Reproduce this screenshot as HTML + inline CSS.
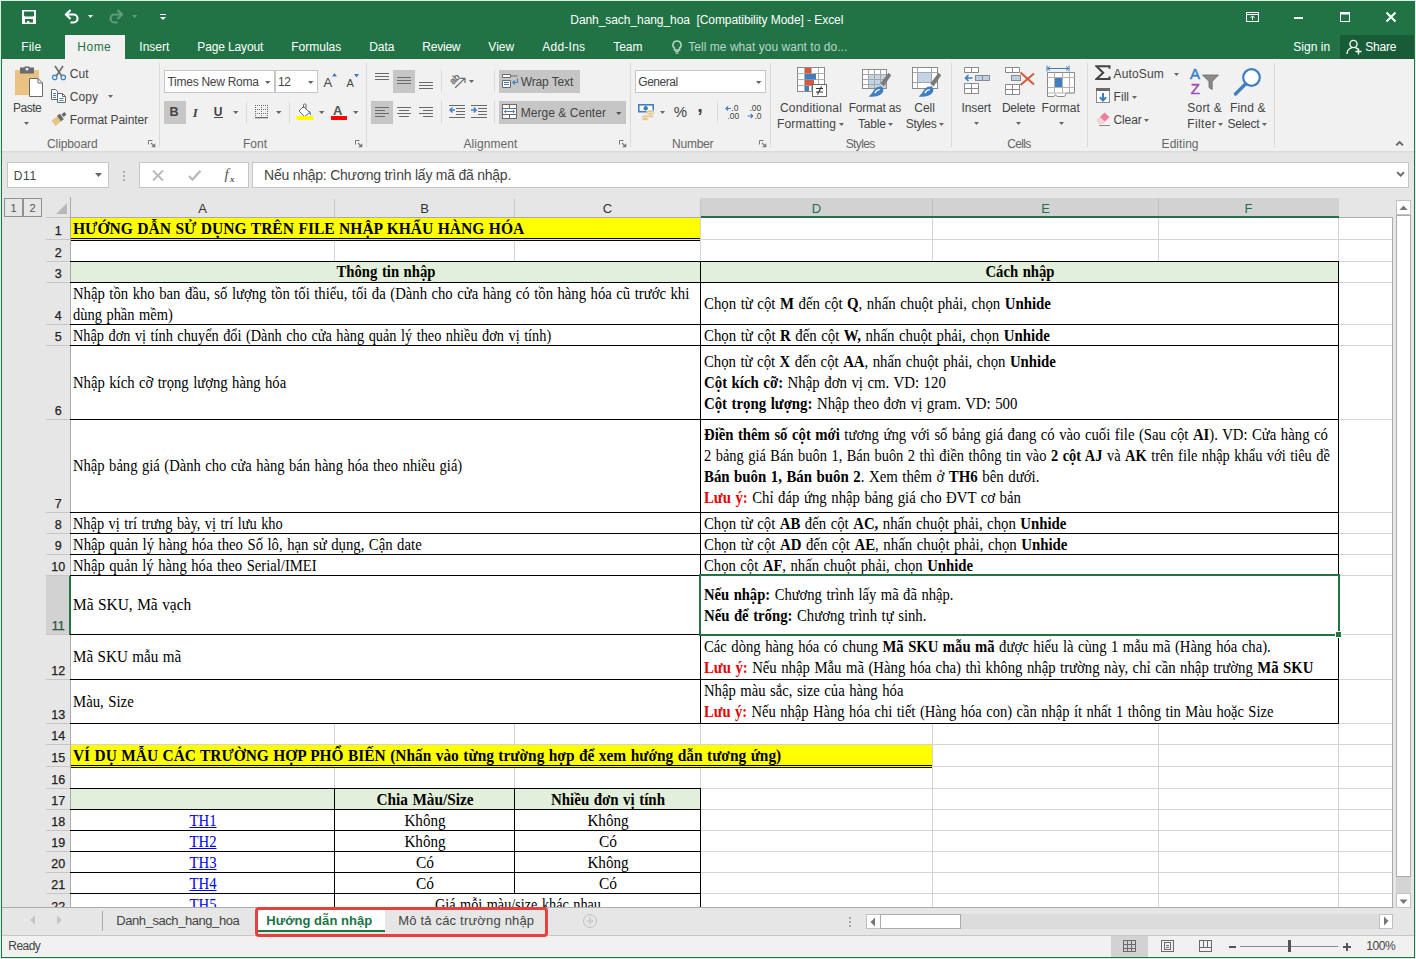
<!DOCTYPE html>
<html><head><meta charset="utf-8"><title>Excel</title><style>
html,body{margin:0;padding:0}
body{width:1416px;height:959px;position:relative;overflow:hidden;background:#e6e6e6;font-family:"Liberation Sans",sans-serif;font-size:12px;color:#444}
div,svg,.t{position:absolute}
.t{white-space:pre;line-height:16px}
.u{font-family:"Liberation Sans",sans-serif;font-size:12px;color:#444}
.w{color:#fff}
.t13{font-size:13px}
.rn{font-size:12.5px;color:#222;-webkit-text-stroke:0.25px #222}
.s{font-family:"Liberation Serif",serif;font-size:16px;color:#000;line-height:21px}
.t16{font-size:16px}
.si{font-family:"Liberation Serif",serif;font-style:italic}
.b{font-weight:bold}
.r{font-weight:bold;color:#e80000}
.lk{color:#0000ee;text-decoration:underline}
</style></head>
<body>
<div style="left:0px;top:0px;width:1416px;height:959px;background:#d9f2e4;"></div>
<div style="left:1px;top:1px;width:1414px;height:957px;background:#e6e6e6;"></div>
<div style="left:1px;top:1px;width:1414px;height:58px;background:#217346;"></div>
<div style="left:2px;top:59px;width:1412px;height:92px;background:#f1f1f1;"></div>
<div style="left:2px;top:151px;width:1412px;height:1px;background:#dadada;"></div>
<div style="left:2px;top:152px;width:1412px;height:1px;background:#e0e0e0;"></div>
<div style="left:1px;top:59px;width:1px;height:899px;background:#217346;"></div>
<div style="left:1414px;top:1px;width:1px;height:957px;background:#217346;"></div>
<div style="left:1px;top:957px;width:1414px;height:1px;background:#217346;"></div>
<div style="left:65px;top:35px;width:60px;height:25px;background:#f1f1f1;"></div>
<div style="left:1340px;top:35px;width:74px;height:24px;background:#185c37;"></div>
<span class="t u w" style="letter-spacing:-0.066px;left:570.3px;top:12px;">Danh_sach_hang_hoa  [Compatibility Mode] - Excel</span>
<span class="t u w" style="letter-spacing:0.164px;left:21.3px;top:39px;">File</span>
<span class="t u w" style="letter-spacing:-0.003px;left:139.3px;top:39px;">Insert</span>
<span class="t u w" style="letter-spacing:-0.126px;left:197.3px;top:39px;">Page Layout</span>
<span class="t u w" style="letter-spacing:-0.002px;left:291.3px;top:39px;">Formulas</span>
<span class="t u w" style="letter-spacing:-0.09px;left:369.3px;top:39px;">Data</span>
<span class="t u w" style="letter-spacing:-0.227px;left:422.3px;top:39px;">Review</span>
<span class="t u w" style="letter-spacing:0.051px;left:488.3px;top:39px;">View</span>
<span class="t u w" style="letter-spacing:0.234px;left:542.3px;top:39px;">Add-Ins</span>
<span class="t u w" style="letter-spacing:-0.086px;left:613.3px;top:39px;">Team</span>
<span class="t u" style="letter-spacing:0.496px;left:77.3px;top:39px;color:#217346;">Home</span>
<span class="t u" style="letter-spacing:0.03px;left:688.3px;top:39px;color:#b9d6c5;">Tell me what you want to do...</span>
<span class="t u w" style="letter-spacing:0.042px;left:1293.3px;top:39px;">Sign in</span>
<span class="t u w" style="letter-spacing:-0.206px;left:1365.3px;top:39px;">Share</span>
<div style="left:71px;top:218px;width:1321px;height:689px;background:#fff;"></div>
<div style="left:334px;top:218px;width:1px;height:689px;background:#d4d4d4;"></div>
<div style="left:514px;top:218px;width:1px;height:689px;background:#d4d4d4;"></div>
<div style="left:700px;top:218px;width:1px;height:689px;background:#d4d4d4;"></div>
<div style="left:932px;top:218px;width:1px;height:689px;background:#d4d4d4;"></div>
<div style="left:1158px;top:218px;width:1px;height:689px;background:#d4d4d4;"></div>
<div style="left:1338px;top:218px;width:1px;height:689px;background:#d4d4d4;"></div>
<div style="left:71px;top:239px;width:1321px;height:1px;background:#d4d4d4;"></div>
<div style="left:71px;top:261px;width:1321px;height:1px;background:#d4d4d4;"></div>
<div style="left:71px;top:282px;width:1321px;height:1px;background:#d4d4d4;"></div>
<div style="left:71px;top:324px;width:1321px;height:1px;background:#d4d4d4;"></div>
<div style="left:71px;top:345px;width:1321px;height:1px;background:#d4d4d4;"></div>
<div style="left:71px;top:419px;width:1321px;height:1px;background:#d4d4d4;"></div>
<div style="left:71px;top:512px;width:1321px;height:1px;background:#d4d4d4;"></div>
<div style="left:71px;top:533px;width:1321px;height:1px;background:#d4d4d4;"></div>
<div style="left:71px;top:554px;width:1321px;height:1px;background:#d4d4d4;"></div>
<div style="left:71px;top:575px;width:1321px;height:1px;background:#d4d4d4;"></div>
<div style="left:71px;top:634px;width:1321px;height:1px;background:#d4d4d4;"></div>
<div style="left:71px;top:679px;width:1321px;height:1px;background:#d4d4d4;"></div>
<div style="left:71px;top:723px;width:1321px;height:1px;background:#d4d4d4;"></div>
<div style="left:71px;top:744px;width:1321px;height:1px;background:#d4d4d4;"></div>
<div style="left:71px;top:766px;width:1321px;height:1px;background:#d4d4d4;"></div>
<div style="left:71px;top:788px;width:1321px;height:1px;background:#d4d4d4;"></div>
<div style="left:71px;top:809px;width:1321px;height:1px;background:#d4d4d4;"></div>
<div style="left:71px;top:830px;width:1321px;height:1px;background:#d4d4d4;"></div>
<div style="left:71px;top:851px;width:1321px;height:1px;background:#d4d4d4;"></div>
<div style="left:71px;top:872px;width:1321px;height:1px;background:#d4d4d4;"></div>
<div style="left:71px;top:893px;width:1321px;height:1px;background:#d4d4d4;"></div>
<div style="left:2px;top:190px;width:1412px;height:28px;background:#e6e6e6;"></div>
<div style="left:2px;top:198px;width:69px;height:709px;background:#e6e6e6;"></div>
<div style="left:71px;top:217px;width:1322px;height:1px;background:#ababab;"></div>
<div style="left:70px;top:197px;width:1px;height:710px;background:#ababab;"></div>
<div style="left:1392px;top:217px;width:1px;height:690px;background:#ababab;"></div>
<div style="left:334px;top:199px;width:1px;height:18px;background:#c6c6c6;"></div>
<div style="left:514px;top:199px;width:1px;height:18px;background:#c6c6c6;"></div>
<div style="left:700px;top:199px;width:1px;height:18px;background:#c6c6c6;"></div>
<div style="left:932px;top:199px;width:1px;height:18px;background:#c6c6c6;"></div>
<div style="left:1158px;top:199px;width:1px;height:18px;background:#c6c6c6;"></div>
<div style="left:1338px;top:199px;width:1px;height:18px;background:#c6c6c6;"></div>
<div style="left:701px;top:198px;width:638px;height:18px;background:#d2d2d2;"></div>
<div style="left:932px;top:199px;width:1px;height:17px;background:#bdbdbd;"></div>
<div style="left:1158px;top:199px;width:1px;height:17px;background:#bdbdbd;"></div>
<div style="left:701px;top:216px;width:638px;height:2px;background:#217346;"></div>
<div style="left:46px;top:217px;width:24px;height:1px;background:#c6c6c6;"></div>
<div style="left:46px;top:239px;width:24px;height:1px;background:#c6c6c6;"></div>
<div style="left:46px;top:261px;width:24px;height:1px;background:#c6c6c6;"></div>
<div style="left:46px;top:282px;width:24px;height:1px;background:#c6c6c6;"></div>
<div style="left:46px;top:324px;width:24px;height:1px;background:#c6c6c6;"></div>
<div style="left:46px;top:345px;width:24px;height:1px;background:#c6c6c6;"></div>
<div style="left:46px;top:419px;width:24px;height:1px;background:#c6c6c6;"></div>
<div style="left:46px;top:512px;width:24px;height:1px;background:#c6c6c6;"></div>
<div style="left:46px;top:533px;width:24px;height:1px;background:#c6c6c6;"></div>
<div style="left:46px;top:554px;width:24px;height:1px;background:#c6c6c6;"></div>
<div style="left:46px;top:575px;width:24px;height:1px;background:#c6c6c6;"></div>
<div style="left:46px;top:634px;width:24px;height:1px;background:#c6c6c6;"></div>
<div style="left:46px;top:679px;width:24px;height:1px;background:#c6c6c6;"></div>
<div style="left:46px;top:723px;width:24px;height:1px;background:#c6c6c6;"></div>
<div style="left:46px;top:744px;width:24px;height:1px;background:#c6c6c6;"></div>
<div style="left:46px;top:766px;width:24px;height:1px;background:#c6c6c6;"></div>
<div style="left:46px;top:788px;width:24px;height:1px;background:#c6c6c6;"></div>
<div style="left:46px;top:809px;width:24px;height:1px;background:#c6c6c6;"></div>
<div style="left:46px;top:830px;width:24px;height:1px;background:#c6c6c6;"></div>
<div style="left:46px;top:851px;width:24px;height:1px;background:#c6c6c6;"></div>
<div style="left:46px;top:872px;width:24px;height:1px;background:#c6c6c6;"></div>
<div style="left:46px;top:893px;width:24px;height:1px;background:#c6c6c6;"></div>
<div style="left:46px;top:576px;width:23px;height:58px;background:#d2d2d2;"></div>
<div style="left:69px;top:576px;width:2px;height:59px;background:#217346;"></div>
<span class="t u" style="left:202.5px;top:200.6px;transform:translateX(-50%);font-size:13px;color:#333;">A</span>
<span class="t u" style="left:424.5px;top:200.6px;transform:translateX(-50%);font-size:13px;color:#333;">B</span>
<span class="t u" style="left:607.5px;top:200.6px;transform:translateX(-50%);font-size:13px;color:#333;">C</span>
<span class="t u" style="left:816.5px;top:200.6px;transform:translateX(-50%);font-size:13px;color:#217346;">D</span>
<span class="t u" style="left:1045.5px;top:200.6px;transform:translateX(-50%);font-size:13px;color:#217346;">E</span>
<span class="t u" style="left:1248.5px;top:200.6px;transform:translateX(-50%);font-size:13px;color:#217346;">F</span>
<span class="t u rn" style="left:58.3px;top:222.8px;transform:translateX(-50%);">1</span>
<span class="t u rn" style="left:58.3px;top:244.8px;transform:translateX(-50%);">2</span>
<span class="t u rn" style="left:58.3px;top:265.8px;transform:translateX(-50%);">3</span>
<span class="t u rn" style="left:58.3px;top:307.8px;transform:translateX(-50%);">4</span>
<span class="t u rn" style="left:58.3px;top:328.8px;transform:translateX(-50%);">5</span>
<span class="t u rn" style="left:58.3px;top:402.8px;transform:translateX(-50%);">6</span>
<span class="t u rn" style="left:58.3px;top:495.8px;transform:translateX(-50%);">7</span>
<span class="t u rn" style="left:58.3px;top:516.8px;transform:translateX(-50%);">8</span>
<span class="t u rn" style="left:58.3px;top:537.8px;transform:translateX(-50%);">9</span>
<span class="t u rn" style="left:58.3px;top:558.8px;transform:translateX(-50%);">10</span>
<span class="t u rn" style="left:58.3px;top:617.8px;transform:translateX(-50%);color:#217346;">11</span>
<span class="t u rn" style="left:58.3px;top:662.8px;transform:translateX(-50%);">12</span>
<span class="t u rn" style="left:58.3px;top:706.8px;transform:translateX(-50%);">13</span>
<span class="t u rn" style="left:58.3px;top:727.8px;transform:translateX(-50%);">14</span>
<span class="t u rn" style="left:58.3px;top:749.8px;transform:translateX(-50%);">15</span>
<span class="t u rn" style="left:58.3px;top:771.8px;transform:translateX(-50%);">16</span>
<span class="t u rn" style="left:58.3px;top:792.8px;transform:translateX(-50%);">17</span>
<span class="t u rn" style="left:58.3px;top:813.8px;transform:translateX(-50%);">18</span>
<span class="t u rn" style="left:58.3px;top:834.8px;transform:translateX(-50%);">19</span>
<span class="t u rn" style="left:58.3px;top:855.8px;transform:translateX(-50%);">20</span>
<span class="t u rn" style="left:58.3px;top:876.8px;transform:translateX(-50%);">21</span>
<span class="t u rn" style="left:58.3px;top:898.8px;transform:translateX(-50%);">22</span>
<svg style="left:56px;top:203px" width="12" height="12"><path d="M11 0V11H0Z" fill="#b7b7b7"/></svg>
<div style="left:4px;top:198px;width:19px;height:19px;box-sizing:border-box;border:1px solid #919191;background:#e6e6e6;"></div>
<span class="t u" style="left:13.5px;top:200px;transform:translateX(-50%);color:#555;font-size:11px;">1</span>
<div style="left:23px;top:198px;width:19px;height:19px;box-sizing:border-box;border:1px solid #919191;background:#e6e6e6;"></div>
<span class="t u" style="left:32.5px;top:200px;transform:translateX(-50%);color:#555;font-size:11px;">2</span>
<div style="left:71px;top:218px;width:629px;height:21px;background:#ffff00;"></div>
<div style="left:71px;top:262px;width:629px;height:20px;background:#e2efda;"></div>
<div style="left:701px;top:262px;width:637px;height:20px;background:#e2efda;"></div>
<div style="left:71px;top:283px;width:629px;height:41px;background:#fff;"></div>
<div style="left:701px;top:283px;width:637px;height:41px;background:#fff;"></div>
<div style="left:71px;top:325px;width:629px;height:20px;background:#fff;"></div>
<div style="left:701px;top:325px;width:637px;height:20px;background:#fff;"></div>
<div style="left:71px;top:346px;width:629px;height:73px;background:#fff;"></div>
<div style="left:701px;top:346px;width:637px;height:73px;background:#fff;"></div>
<div style="left:71px;top:420px;width:629px;height:92px;background:#fff;"></div>
<div style="left:701px;top:420px;width:637px;height:92px;background:#fff;"></div>
<div style="left:71px;top:513px;width:629px;height:20px;background:#fff;"></div>
<div style="left:701px;top:513px;width:637px;height:20px;background:#fff;"></div>
<div style="left:71px;top:534px;width:629px;height:20px;background:#fff;"></div>
<div style="left:701px;top:534px;width:637px;height:20px;background:#fff;"></div>
<div style="left:71px;top:555px;width:629px;height:20px;background:#fff;"></div>
<div style="left:701px;top:555px;width:637px;height:20px;background:#fff;"></div>
<div style="left:71px;top:576px;width:629px;height:58px;background:#fff;"></div>
<div style="left:701px;top:576px;width:637px;height:58px;background:#fff;"></div>
<div style="left:71px;top:635px;width:629px;height:44px;background:#fff;"></div>
<div style="left:701px;top:635px;width:637px;height:44px;background:#fff;"></div>
<div style="left:71px;top:680px;width:629px;height:43px;background:#fff;"></div>
<div style="left:701px;top:680px;width:637px;height:43px;background:#fff;"></div>
<div style="left:71px;top:745px;width:861px;height:21px;background:#ffff00;"></div>
<div style="left:71px;top:789px;width:629px;height:20px;background:#e2efda;"></div>
<div style="left:335px;top:894px;width:365px;height:21px;background:#fff;"></div>
<div style="left:70px;top:261px;width:631px;height:1px;background:#000;"></div>
<div style="left:70px;top:282px;width:631px;height:1px;background:#000;"></div>
<div style="left:700px;top:261px;width:1px;height:22px;background:#000;"></div>
<div style="left:700px;top:261px;width:639px;height:1px;background:#000;"></div>
<div style="left:700px;top:282px;width:639px;height:1px;background:#000;"></div>
<div style="left:700px;top:261px;width:1px;height:22px;background:#000;"></div>
<div style="left:1338px;top:261px;width:1px;height:22px;background:#000;"></div>
<div style="left:70px;top:282px;width:631px;height:1px;background:#000;"></div>
<div style="left:70px;top:324px;width:631px;height:1px;background:#000;"></div>
<div style="left:700px;top:282px;width:1px;height:43px;background:#000;"></div>
<div style="left:700px;top:282px;width:639px;height:1px;background:#000;"></div>
<div style="left:700px;top:324px;width:639px;height:1px;background:#000;"></div>
<div style="left:700px;top:282px;width:1px;height:43px;background:#000;"></div>
<div style="left:1338px;top:282px;width:1px;height:43px;background:#000;"></div>
<div style="left:70px;top:324px;width:631px;height:1px;background:#000;"></div>
<div style="left:70px;top:345px;width:631px;height:1px;background:#000;"></div>
<div style="left:700px;top:324px;width:1px;height:22px;background:#000;"></div>
<div style="left:700px;top:324px;width:639px;height:1px;background:#000;"></div>
<div style="left:700px;top:345px;width:639px;height:1px;background:#000;"></div>
<div style="left:700px;top:324px;width:1px;height:22px;background:#000;"></div>
<div style="left:1338px;top:324px;width:1px;height:22px;background:#000;"></div>
<div style="left:70px;top:345px;width:631px;height:1px;background:#000;"></div>
<div style="left:70px;top:419px;width:631px;height:1px;background:#000;"></div>
<div style="left:700px;top:345px;width:1px;height:75px;background:#000;"></div>
<div style="left:700px;top:345px;width:639px;height:1px;background:#000;"></div>
<div style="left:700px;top:419px;width:639px;height:1px;background:#000;"></div>
<div style="left:700px;top:345px;width:1px;height:75px;background:#000;"></div>
<div style="left:1338px;top:345px;width:1px;height:75px;background:#000;"></div>
<div style="left:70px;top:419px;width:631px;height:1px;background:#000;"></div>
<div style="left:70px;top:512px;width:631px;height:1px;background:#000;"></div>
<div style="left:700px;top:419px;width:1px;height:94px;background:#000;"></div>
<div style="left:700px;top:419px;width:639px;height:1px;background:#000;"></div>
<div style="left:700px;top:512px;width:639px;height:1px;background:#000;"></div>
<div style="left:700px;top:419px;width:1px;height:94px;background:#000;"></div>
<div style="left:1338px;top:419px;width:1px;height:94px;background:#000;"></div>
<div style="left:70px;top:512px;width:631px;height:1px;background:#000;"></div>
<div style="left:70px;top:533px;width:631px;height:1px;background:#000;"></div>
<div style="left:700px;top:512px;width:1px;height:22px;background:#000;"></div>
<div style="left:700px;top:512px;width:639px;height:1px;background:#000;"></div>
<div style="left:700px;top:533px;width:639px;height:1px;background:#000;"></div>
<div style="left:700px;top:512px;width:1px;height:22px;background:#000;"></div>
<div style="left:1338px;top:512px;width:1px;height:22px;background:#000;"></div>
<div style="left:70px;top:533px;width:631px;height:1px;background:#000;"></div>
<div style="left:70px;top:554px;width:631px;height:1px;background:#000;"></div>
<div style="left:700px;top:533px;width:1px;height:22px;background:#000;"></div>
<div style="left:700px;top:533px;width:639px;height:1px;background:#000;"></div>
<div style="left:700px;top:554px;width:639px;height:1px;background:#000;"></div>
<div style="left:700px;top:533px;width:1px;height:22px;background:#000;"></div>
<div style="left:1338px;top:533px;width:1px;height:22px;background:#000;"></div>
<div style="left:70px;top:554px;width:631px;height:1px;background:#000;"></div>
<div style="left:70px;top:575px;width:631px;height:1px;background:#000;"></div>
<div style="left:700px;top:554px;width:1px;height:22px;background:#000;"></div>
<div style="left:700px;top:554px;width:639px;height:1px;background:#000;"></div>
<div style="left:700px;top:575px;width:639px;height:1px;background:#000;"></div>
<div style="left:700px;top:554px;width:1px;height:22px;background:#000;"></div>
<div style="left:1338px;top:554px;width:1px;height:22px;background:#000;"></div>
<div style="left:70px;top:575px;width:631px;height:1px;background:#000;"></div>
<div style="left:70px;top:634px;width:631px;height:1px;background:#000;"></div>
<div style="left:700px;top:575px;width:1px;height:60px;background:#000;"></div>
<div style="left:700px;top:575px;width:639px;height:1px;background:#000;"></div>
<div style="left:700px;top:634px;width:639px;height:1px;background:#000;"></div>
<div style="left:700px;top:575px;width:1px;height:60px;background:#000;"></div>
<div style="left:1338px;top:575px;width:1px;height:60px;background:#000;"></div>
<div style="left:70px;top:634px;width:631px;height:1px;background:#000;"></div>
<div style="left:70px;top:679px;width:631px;height:1px;background:#000;"></div>
<div style="left:700px;top:634px;width:1px;height:46px;background:#000;"></div>
<div style="left:700px;top:634px;width:639px;height:1px;background:#000;"></div>
<div style="left:700px;top:679px;width:639px;height:1px;background:#000;"></div>
<div style="left:700px;top:634px;width:1px;height:46px;background:#000;"></div>
<div style="left:1338px;top:634px;width:1px;height:46px;background:#000;"></div>
<div style="left:70px;top:679px;width:631px;height:1px;background:#000;"></div>
<div style="left:70px;top:723px;width:631px;height:1px;background:#000;"></div>
<div style="left:700px;top:679px;width:1px;height:45px;background:#000;"></div>
<div style="left:700px;top:679px;width:639px;height:1px;background:#000;"></div>
<div style="left:700px;top:723px;width:639px;height:1px;background:#000;"></div>
<div style="left:700px;top:679px;width:1px;height:45px;background:#000;"></div>
<div style="left:1338px;top:679px;width:1px;height:45px;background:#000;"></div>
<div style="left:70px;top:788px;width:265px;height:1px;background:#000;"></div>
<div style="left:70px;top:809px;width:265px;height:1px;background:#000;"></div>
<div style="left:334px;top:788px;width:1px;height:22px;background:#000;"></div>
<div style="left:334px;top:788px;width:181px;height:1px;background:#000;"></div>
<div style="left:334px;top:809px;width:181px;height:1px;background:#000;"></div>
<div style="left:334px;top:788px;width:1px;height:22px;background:#000;"></div>
<div style="left:514px;top:788px;width:1px;height:22px;background:#000;"></div>
<div style="left:514px;top:788px;width:187px;height:1px;background:#000;"></div>
<div style="left:514px;top:809px;width:187px;height:1px;background:#000;"></div>
<div style="left:514px;top:788px;width:1px;height:22px;background:#000;"></div>
<div style="left:700px;top:788px;width:1px;height:22px;background:#000;"></div>
<div style="left:70px;top:809px;width:265px;height:1px;background:#000;"></div>
<div style="left:70px;top:830px;width:265px;height:1px;background:#000;"></div>
<div style="left:334px;top:809px;width:1px;height:22px;background:#000;"></div>
<div style="left:334px;top:809px;width:181px;height:1px;background:#000;"></div>
<div style="left:334px;top:830px;width:181px;height:1px;background:#000;"></div>
<div style="left:334px;top:809px;width:1px;height:22px;background:#000;"></div>
<div style="left:514px;top:809px;width:1px;height:22px;background:#000;"></div>
<div style="left:514px;top:809px;width:187px;height:1px;background:#000;"></div>
<div style="left:514px;top:830px;width:187px;height:1px;background:#000;"></div>
<div style="left:514px;top:809px;width:1px;height:22px;background:#000;"></div>
<div style="left:700px;top:809px;width:1px;height:22px;background:#000;"></div>
<div style="left:70px;top:830px;width:265px;height:1px;background:#000;"></div>
<div style="left:70px;top:851px;width:265px;height:1px;background:#000;"></div>
<div style="left:334px;top:830px;width:1px;height:22px;background:#000;"></div>
<div style="left:334px;top:830px;width:181px;height:1px;background:#000;"></div>
<div style="left:334px;top:851px;width:181px;height:1px;background:#000;"></div>
<div style="left:334px;top:830px;width:1px;height:22px;background:#000;"></div>
<div style="left:514px;top:830px;width:1px;height:22px;background:#000;"></div>
<div style="left:514px;top:830px;width:187px;height:1px;background:#000;"></div>
<div style="left:514px;top:851px;width:187px;height:1px;background:#000;"></div>
<div style="left:514px;top:830px;width:1px;height:22px;background:#000;"></div>
<div style="left:700px;top:830px;width:1px;height:22px;background:#000;"></div>
<div style="left:70px;top:851px;width:265px;height:1px;background:#000;"></div>
<div style="left:70px;top:872px;width:265px;height:1px;background:#000;"></div>
<div style="left:334px;top:851px;width:1px;height:22px;background:#000;"></div>
<div style="left:334px;top:851px;width:181px;height:1px;background:#000;"></div>
<div style="left:334px;top:872px;width:181px;height:1px;background:#000;"></div>
<div style="left:334px;top:851px;width:1px;height:22px;background:#000;"></div>
<div style="left:514px;top:851px;width:1px;height:22px;background:#000;"></div>
<div style="left:514px;top:851px;width:187px;height:1px;background:#000;"></div>
<div style="left:514px;top:872px;width:187px;height:1px;background:#000;"></div>
<div style="left:514px;top:851px;width:1px;height:22px;background:#000;"></div>
<div style="left:700px;top:851px;width:1px;height:22px;background:#000;"></div>
<div style="left:70px;top:872px;width:265px;height:1px;background:#000;"></div>
<div style="left:70px;top:893px;width:265px;height:1px;background:#000;"></div>
<div style="left:334px;top:872px;width:1px;height:22px;background:#000;"></div>
<div style="left:334px;top:872px;width:181px;height:1px;background:#000;"></div>
<div style="left:334px;top:893px;width:181px;height:1px;background:#000;"></div>
<div style="left:334px;top:872px;width:1px;height:22px;background:#000;"></div>
<div style="left:514px;top:872px;width:1px;height:22px;background:#000;"></div>
<div style="left:514px;top:872px;width:187px;height:1px;background:#000;"></div>
<div style="left:514px;top:893px;width:187px;height:1px;background:#000;"></div>
<div style="left:514px;top:872px;width:1px;height:22px;background:#000;"></div>
<div style="left:700px;top:872px;width:1px;height:22px;background:#000;"></div>
<div style="left:70px;top:893px;width:265px;height:1px;background:#000;"></div>
<div style="left:70px;top:915px;width:265px;height:1px;background:#000;"></div>
<div style="left:334px;top:893px;width:1px;height:23px;background:#000;"></div>
<div style="left:334px;top:893px;width:367px;height:1px;background:#000;"></div>
<div style="left:334px;top:915px;width:367px;height:1px;background:#000;"></div>
<div style="left:334px;top:893px;width:1px;height:23px;background:#000;"></div>
<div style="left:700px;top:893px;width:1px;height:23px;background:#000;"></div>
<div style="left:71px;top:238px;width:629px;height:1px;background:#000;"></div>
<div style="left:71px;top:239px;width:629px;height:1px;background:#ffff00;"></div>
<div style="left:71px;top:240px;width:629px;height:1px;background:#000;"></div>
<div style="left:71px;top:765px;width:861px;height:1px;background:#000;"></div>
<div style="left:71px;top:766px;width:861px;height:1px;background:#ffff00;"></div>
<div style="left:71px;top:767px;width:861px;height:1px;background:#000;"></div>
<span class="t s b t16" style="left:72.8px;top:217.9px;word-spacing:0.64px;transform:scaleX(0.9699);transform-origin:0 50%;">HƯỚNG DẪN SỬ DỤNG TRÊN FILE NHẬP KHẨU HÀNG HÓA</span>
<span class="t s b" style="word-spacing:0.892px;left:385.5px;top:260.9px;transform:translateX(-50%) scaleX(0.9198);">Thông tin nhập</span>
<span class="t s b" style="word-spacing:0.901px;left:1019.5px;top:260.9px;transform:translateX(-50%) scaleX(0.9181);">Cách nhập</span>
<span class="t s" style="left:72.8px;top:282.9px;word-spacing:0.897px;transform:scaleX(0.919);transform-origin:0 50%;">Nhập tồn kho ban đầu, số lượng tồn tối thiểu, tối đa (Dành cho cửa hàng có tồn hàng hóa cũ trước khi</span>
<span class="t s" style="left:72.8px;top:303.9px;word-spacing:0.982px;transform:scaleX(0.9032);transform-origin:0 50%;">dùng phần mềm)</span>
<span class="t s" style="left:72.8px;top:324.9px;word-spacing:1.029px;transform:scaleX(0.8948);transform-origin:0 50%;">Nhập đơn vị tính chuyển đổi (Dành cho cửa hàng quản lý theo nhiều đơn vị tính)</span>
<span class="t s" style="left:72.8px;top:371.9px;word-spacing:0.914px;transform:scaleX(0.9158);transform-origin:0 50%;">Nhập kích cỡ trọng lượng hàng hóa</span>
<span class="t s" style="left:72.8px;top:454.9px;word-spacing:0.936px;transform:scaleX(0.9118);transform-origin:0 50%;">Nhập bảng giá (Dành cho cửa hàng bán hàng hóa theo nhiều giá)</span>
<span class="t s" style="left:72.8px;top:512.9px;word-spacing:1.016px;transform:scaleX(0.8972);transform-origin:0 50%;">Nhập vị trí trưng bày, vị trí lưu kho</span>
<span class="t s" style="left:72.8px;top:533.9px;word-spacing:0.882px;transform:scaleX(0.9217);transform-origin:0 50%;">Nhập quản lý hàng hóa theo Số lô, hạn sử dụng, Cận date</span>
<span class="t s" style="left:72.8px;top:554.9px;word-spacing:0.909px;transform:scaleX(0.9168);transform-origin:0 50%;">Nhập quản lý hàng hóa theo Serial/IMEI</span>
<span class="t s" style="left:72.8px;top:593.9px;word-spacing:0.679px;transform:scaleX(0.9617);transform-origin:0 50%;">Mã SKU, Mã vạch</span>
<span class="t s" style="left:72.8px;top:645.9px;word-spacing:0.773px;transform:scaleX(0.9429);transform-origin:0 50%;">Mã SKU mẫu mã</span>
<span class="t s" style="left:72.8px;top:690.9px;word-spacing:0.874px;transform:scaleX(0.9232);transform-origin:0 50%;">Màu, Size</span>
<span class="t s" style="left:703.6px;top:292.9px;word-spacing:0.852px;transform:scaleX(0.9275);transform-origin:0 50%;">Chọn từ cột <span class="b">M</span> đến cột <span class="b">Q</span>, nhấn chuột phải, chọn <span class="b">Unhide</span></span>
<span class="t s" style="left:703.6px;top:324.9px;word-spacing:0.846px;transform:scaleX(0.9286);transform-origin:0 50%;">Chọn từ cột <span class="b">R</span> đến cột <span class="b">W,</span> nhấn chuột phải, chọn <span class="b">Unhide</span></span>
<span class="t s" style="left:703.6px;top:350.9px;word-spacing:0.877px;transform:scaleX(0.9226);transform-origin:0 50%;">Chọn từ cột <span class="b">X</span> đến cột <span class="b">AA</span>, nhấn chuột phải, chọn <span class="b">Unhide</span></span>
<span class="t s" style="left:703.6px;top:371.9px;word-spacing:0.849px;transform:scaleX(0.9279);transform-origin:0 50%;"><span class="b">Cột kích cỡ:</span> Nhập đơn vị cm. VD: 120</span>
<span class="t s" style="left:703.6px;top:392.9px;word-spacing:0.858px;transform:scaleX(0.9264);transform-origin:0 50%;"><span class="b">Cột trọng lượng:</span> Nhập theo đơn vị gram. VD: 500</span>
<span class="t s" style="left:703.6px;top:423.9px;word-spacing:0.887px;transform:scaleX(0.9208);transform-origin:0 50%;"><span class="b">Điền thêm số cột mới</span> tương ứng với số bảng giá đang có vào cuối file (Sau cột <span class="b">AI</span>). VD: Cửa hàng có</span>
<span class="t s" style="left:703.6px;top:444.9px;word-spacing:0.994px;transform:scaleX(0.9012);transform-origin:0 50%;">2 bảng giá Bán buôn 1, Bán buôn 2 thì điền thông tin vào <span class="b">2 cột AJ</span> và <span class="b">AK</span> trên file nhập khẩu với tiêu đề</span>
<span class="t s" style="left:703.6px;top:465.9px;word-spacing:0.846px;transform:scaleX(0.9285);transform-origin:0 50%;"><span class="b">Bán buôn 1, Bán buôn 2</span>. Xem thêm ở <span class="b">TH6</span> bên dưới.</span>
<span class="t s" style="left:703.6px;top:486.9px;word-spacing:0.872px;transform:scaleX(0.9237);transform-origin:0 50%;"><span class="r">Lưu ý:</span> Chỉ đáp ứng nhập bảng giá cho ĐVT cơ bản</span>
<span class="t s" style="left:703.6px;top:512.9px;word-spacing:0.867px;transform:scaleX(0.9245);transform-origin:0 50%;">Chọn từ cột <span class="b">AB</span> đến cột <span class="b">AC,</span> nhấn chuột phải, chọn <span class="b">Unhide</span></span>
<span class="t s" style="left:703.6px;top:533.9px;word-spacing:0.852px;transform:scaleX(0.9275);transform-origin:0 50%;">Chọn từ cột <span class="b">AD</span> đến cột <span class="b">AE</span>, nhấn chuột phải, chọn <span class="b">Unhide</span></span>
<span class="t s" style="left:703.6px;top:554.9px;word-spacing:0.903px;transform:scaleX(0.9179);transform-origin:0 50%;">Chọn cột <span class="b">AF</span>, nhấn chuột phải, chọn <span class="b">Unhide</span></span>
<span class="t s" style="left:703.6px;top:583.9px;word-spacing:0.934px;transform:scaleX(0.9121);transform-origin:0 50%;"><span class="b">Nếu nhập:</span> Chương trình lấy mã đã nhập.</span>
<span class="t s" style="left:703.6px;top:604.9px;word-spacing:0.883px;transform:scaleX(0.9216);transform-origin:0 50%;"><span class="b">Nếu để trống:</span> Chương trình tự sinh.</span>
<span class="t s" style="left:703.6px;top:635.9px;word-spacing:0.909px;transform:scaleX(0.9166);transform-origin:0 50%;">Các dòng hàng hóa có chung <span class="b">Mã SKU mẫu mã</span> được hiểu là cùng 1 mẫu mã (Hàng hóa cha).</span>
<span class="t s" style="left:703.6px;top:656.9px;word-spacing:0.883px;transform:scaleX(0.9216);transform-origin:0 50%;"><span class="r">Lưu ý:</span> Nếu nhập Mẫu mã (Hàng hóa cha) thì không nhập trường này, chỉ cần nhập trường <span class="b">Mã SKU</span></span>
<span class="t s" style="left:703.6px;top:679.9px;word-spacing:0.905px;transform:scaleX(0.9174);transform-origin:0 50%;">Nhập màu sắc, size của hàng hóa</span>
<span class="t s" style="left:703.6px;top:700.9px;word-spacing:0.953px;transform:scaleX(0.9085);transform-origin:0 50%;"><span class="r">Lưu ý:</span> Nếu nhập Hàng hóa chi tiết (Hàng hóa con) cần nhập ít nhất 1 thông tin Màu hoặc Size</span>
<span class="t s b t16" style="left:72.8px;top:744.9px;word-spacing:0.681px;transform:scaleX(0.9614);transform-origin:0 50%;">VÍ DỤ MẪU CÁC TRƯỜNG HỢP PHỔ BIẾN (Nhấn vào từng trường hợp để xem hướng dẫn tương ứng)</span>
<span class="t s b t16" style="word-spacing:0.714px;left:424.5px;top:788.9px;transform:translateX(-50%) scaleX(0.9547);">Chia Màu/Size</span>
<span class="t s b t16" style="word-spacing:0.817px;left:607.5px;top:788.9px;transform:translateX(-50%) scaleX(0.9342);">Nhiều đơn vị tính</span>
<span class="t s t16 lk" style="left:202.5px;top:809.9px;transform:translateX(-50%) scaleX(0.9206);">TH1</span>
<span class="t s t16" style="left:424.5px;top:809.9px;transform:translateX(-50%) scaleX(0.9412);">Không</span>
<span class="t s t16" style="left:607.5px;top:809.9px;transform:translateX(-50%) scaleX(0.9412);">Không</span>
<span class="t s t16 lk" style="left:202.5px;top:830.9px;transform:translateX(-50%) scaleX(0.9206);">TH2</span>
<span class="t s t16" style="left:424.5px;top:830.9px;transform:translateX(-50%) scaleX(0.9412);">Không</span>
<span class="t s t16" style="left:607.5px;top:830.9px;transform:translateX(-50%) scaleX(0.964);">Có</span>
<span class="t s t16 lk" style="left:202.5px;top:851.9px;transform:translateX(-50%) scaleX(0.9206);">TH3</span>
<span class="t s t16" style="left:424.5px;top:851.9px;transform:translateX(-50%) scaleX(0.964);">Có</span>
<span class="t s t16" style="left:607.5px;top:851.9px;transform:translateX(-50%) scaleX(0.9412);">Không</span>
<span class="t s t16 lk" style="left:202.5px;top:872.9px;transform:translateX(-50%) scaleX(0.9206);">TH4</span>
<span class="t s t16" style="left:424.5px;top:872.9px;transform:translateX(-50%) scaleX(0.964);">Có</span>
<span class="t s t16" style="left:607.5px;top:872.9px;transform:translateX(-50%) scaleX(0.964);">Có</span>
<span class="t s t16 lk" style="left:202.5px;top:893.9px;transform:translateX(-50%) scaleX(0.9206);">TH5</span>
<span class="t s t16" style="word-spacing:1.053px;left:517.5px;top:893.9px;transform:translateX(-50%) scaleX(0.8906);">Giá mỗi màu/size khác nhau</span>
<div style="left:699px;top:574px;width:641px;height:62px;box-sizing:border-box;border:2px solid #217346;"></div>
<div style="left:1336px;top:632px;width:5px;height:5px;background:#217346;border:1px solid #fff;box-sizing:content-box;margin:-1px;"></div>
<div style="left:2px;top:907px;width:1412px;height:50px;background:#e6e6e6;"></div>
<div style="left:2px;top:907px;width:1392px;height:1px;background:#ababab;"></div>
<svg style="left:27px;top:914px" width="40" height="12"><path d="M8 1.5V10.5L3 6Z" fill="#c6c6c6"/><path d="M30 1.5V10.5L35 6Z" fill="#c6c6c6"/></svg>
<div style="left:102px;top:911px;width:1px;height:20px;background:#ababab;"></div>
<span class="t u t13" style="letter-spacing:-0.436px;left:116.3px;top:913px;">Danh_sach_hang_hoa</span>
<div style="left:258px;top:908px;width:127px;height:24px;background:#fff;"></div>
<div style="left:258px;top:930px;width:127px;height:2px;background:#217346;"></div>
<span class="t u t13 b" style="letter-spacing:0.048px;left:266.3px;top:913px;color:#217346;">Hướng dẫn nhập</span>
<span class="t u t13" style="letter-spacing:0.184px;left:398.3px;top:913px;">Mô tả các trường nhập</span>
<svg style="left:582px;top:913px" width="16" height="16"><circle cx="8" cy="8" r="6.5" fill="none" stroke="#c0c0c0" stroke-width="1"/><path d="M8 4.5V11.5M4.5 8H11.5" stroke="#c0c0c0" stroke-width="1.2"/></svg>
<div style="left:849px;top:916.5px;width:2px;height:2px;background:#a6a6a6;"></div>
<div style="left:849px;top:920.5px;width:2px;height:2px;background:#a6a6a6;"></div>
<div style="left:849px;top:924.5px;width:2px;height:2px;background:#a6a6a6;"></div>
<div style="left:867px;top:914px;width:526px;height:15px;background:#dcdcdc;"></div>
<div style="left:866px;top:914px;width:15px;height:15px;box-sizing:border-box;border:1px solid #c0c0c0;background:#fff;"></div>
<svg style="left:869px;top:916.5px" width="8" height="10"><path d="M6 0.5V9.5L1.5 5Z" fill="#777"/></svg>
<div style="left:880px;top:914px;width:81px;height:15px;box-sizing:border-box;border:1px solid #ababab;background:#fff;"></div>
<div style="left:1379px;top:914px;width:14px;height:15px;box-sizing:border-box;border:1px solid #c0c0c0;background:#fff;"></div>
<svg style="left:1382px;top:916px" width="8" height="10"><path d="M2 0.5V9.5L6.5 5Z" fill="#777"/></svg>
<div style="left:1396px;top:877px;width:15px;height:16px;background:#d4d4d4;"></div>
<div style="left:1396px;top:200px;width:15px;height:15px;box-sizing:border-box;border:1px solid #c0c0c0;background:#fff;"></div>
<svg style="left:1399px;top:204px" width="10" height="8"><path d="M0.5 6H8.5L4.5 1.5Z" fill="#777"/></svg>
<div style="left:1396px;top:215px;width:15px;height:662px;box-sizing:border-box;border:1px solid #ababab;background:#fff;"></div>
<div style="left:1396px;top:893px;width:15px;height:15px;box-sizing:border-box;border:1px solid #c0c0c0;background:#fff;"></div>
<svg style="left:1399px;top:898px" width="10" height="8"><path d="M0.5 1.5H8.5L4.5 6Z" fill="#777"/></svg>
<div style="left:2px;top:935px;width:1412px;height:1px;background:#c6c6c6;"></div>
<div style="left:2px;top:936px;width:1412px;height:21px;background:#f1f1f1;"></div>
<span class="t u" style="letter-spacing:-0.537px;left:8.3px;top:938px;">Ready</span>
<div style="left:1111px;top:936px;width:37px;height:21px;background:#d2d2d2;"></div>
<svg style="left:1123px;top:940px" width="14" height="13"><rect x="0.5" y="0.5" width="12" height="11" fill="none" stroke="#6a6a6a"/><path d="M0.5 4.5H12.5M0.5 8.5H12.5M4.5 0.5V11.5M8.5 0.5V11.5" stroke="#6a6a6a"/></svg>
<svg style="left:1161px;top:940px" width="14" height="13"><rect x="0.5" y="0.5" width="12" height="11" fill="none" stroke="#6a6a6a"/><rect x="3.5" y="2.5" width="6" height="7" fill="none" stroke="#6a6a6a"/><path d="M5 5.5H8M5 7.5H8" stroke="#6a6a6a"/></svg>
<svg style="left:1199px;top:940px" width="14" height="13"><rect x="0.5" y="0.5" width="12" height="11" fill="none" stroke="#6a6a6a"/><path d="M4.5 0.5V7.5H8.5V0.5M0.5 7.5H12.5" fill="none" stroke="#6a6a6a"/></svg>
<div style="left:1229px;top:946px;width:7px;height:2px;background:#555;"></div>
<div style="left:1240px;top:946px;width:98px;height:1px;background:#8a8a8a;"></div>
<div style="left:1288px;top:940px;width:3px;height:12px;background:#555;"></div>
<div style="left:1343px;top:946px;width:8px;height:2px;background:#555;"></div>
<div style="left:1346px;top:943px;width:2px;height:8px;background:#555;"></div>
<span class="t u" style="letter-spacing:-0.426px;left:1366.3px;top:938px;">100%</span>
<div style="left:255px;top:907px;width:293px;height:30px;box-sizing:border-box;border:3px solid #e8403f;border-radius:4px;"></div>
<svg style="left:22px;top:10px" width="14" height="14"><path d="M0 0H14V14H0Z M2 1.4V5.4L3 6.4H11L12 5.4V1.4Z M3 9H11V12.6H7.2V11H5V12.6H3Z" fill="#fff" fill-rule="evenodd"/></svg>
<svg style="left:64px;top:9px" width="16" height="15"><path d="M2.5 5.5H9.5A4 4 0 0 1 9.5 13.5H6.5" fill="none" stroke="#fff" stroke-width="2.2"/><path d="M6.5 1L2 5.5L6.5 10" fill="none" stroke="#fff" stroke-width="2.2"/></svg>
<svg style="left:88px;top:15px" width="6" height="4"><path d="M0 0H5L2.5 3Z" fill="#fff"/></svg>
<svg style="left:108px;top:9px" width="16" height="15"><path d="M13.5 5.5H6.5A4 4 0 0 0 6.5 13.5H9.5" fill="none" stroke="#5f9c7c" stroke-width="2.2"/><path d="M9.5 1L14 5.5L9.5 10" fill="none" stroke="#5f9c7c" stroke-width="2.2"/></svg>
<svg style="left:132px;top:15px" width="6" height="4"><path d="M0 0H5L2.5 3Z" fill="#5f9c7c"/></svg>
<div style="left:160px;top:14px;width:6px;height:1px;background:#fff;"></div>
<svg style="left:160px;top:17px" width="7" height="4"><path d="M0 0H6L3.0 3Z" fill="#fff"/></svg>
<svg style="left:1246px;top:12px" width="13" height="10"><rect x="0.5" y="0.5" width="12" height="9" fill="none" stroke="#fff"/><path d="M0.5 2.5H12.5" stroke="#fff"/><path d="M6.5 8V4M4.5 5.8L6.5 3.8L8.5 5.8" fill="none" stroke="#fff"/></svg>
<div style="left:1294px;top:17px;width:9px;height:2px;background:#fff;"></div>
<svg style="left:1340px;top:12px" width="10" height="10"><rect x="0.5" y="1" width="9" height="8.5" fill="none" stroke="#fff"/><rect x="0" y="0" width="10" height="2.5" fill="#fff"/></svg>
<svg style="left:1385px;top:11px" width="12" height="12"><path d="M1.5 1.5L10.5 10.5M10.5 1.5L1.5 10.5" stroke="#fff" stroke-width="2"/></svg>
<svg style="left:671px;top:40px" width="12" height="14"><path d="M6 1A4 4 0 0 0 3.5 8.2V10H8.5V8.2A4 4 0 0 0 6 1Z" fill="none" stroke="#b5d5c2" stroke-width="1.5"/><path d="M4 11.5H8M4.5 13.2H7.5" stroke="#b5d5c2" stroke-width="1.2"/></svg>
<svg style="left:1346px;top:39px" width="17" height="16"><circle cx="7.5" cy="5" r="3.6" fill="none" stroke="#fff" stroke-width="1.3"/><path d="M0.8 15C1.5 10.5 4 9 6 8.6M9.5 8.6C10.5 9 11.2 9.4 12 10.2" fill="none" stroke="#fff" stroke-width="1.3"/><path d="M12.5 9.5V15.5M9.5 12.5H15.5" stroke="#fff" stroke-width="1.3"/></svg>
<svg style="left:14px;top:66px" width="30" height="32"><rect x="1" y="4" width="24" height="25" fill="#eac282"/>
<path d="M6 1.5H10.5V0.5H15.5V1.5H20V7.5H6Z" fill="#6a6a6a"/><rect x="11.7" y="2" width="2.6" height="2.4" fill="#f1f1f1"/>
<path d="M15.5 12.5H24L28.5 17V30.5H15.5Z" fill="#fff" stroke="#6a6a6a"/><path d="M24 12.5V17H28.5" fill="none" stroke="#6a6a6a"/></svg>
<span class="t u" style="letter-spacing:-0.498px;left:13.0px;top:100px;">Paste</span>
<svg style="left:24px;top:122px" width="6" height="4"><path d="M0 0H5L2.5 3Z" fill="#666"/></svg>
<svg style="left:51px;top:65px" width="16" height="16"><path d="M4 1L11 11.5M12 1L5 11.5" stroke="#6a6a6a" stroke-width="1.6" fill="none"/><circle cx="3.7" cy="12.4" r="2.2" fill="none" stroke="#3f7fc1" stroke-width="1.2"/><circle cx="12.3" cy="12.4" r="2.2" fill="none" stroke="#3f7fc1" stroke-width="1.2"/></svg>
<span class="t u" style="letter-spacing:0.104px;left:69.8px;top:66px;">Cut</span>
<svg style="left:50px;top:88px" width="17" height="16"><path d="M1.5 1.5H5.5L7.5 3.5V11.5H1.5Z" fill="#fff" stroke="#6a6a6a"/>
<path d="M7.5 5.5H12.5L15.5 8.5V14.5H7.5Z" fill="#fff" stroke="#6a6a6a"/><path d="M12.5 5.5V8.5H15.5" fill="none" stroke="#6a6a6a"/>
<path d="M3 5.5H6M3 7.5H6M3 9.5H6M9.5 10.5H13.5M9.5 12.5H13.5" stroke="#3f7fc1" stroke-width="1"/></svg>
<span class="t u" style="letter-spacing:0.096px;left:69.8px;top:89px;">Copy</span>
<svg style="left:108px;top:95px" width="6" height="4"><path d="M0 0H5L2.5 3Z" fill="#666"/></svg>
<svg style="left:51px;top:111px" width="17" height="16"><path d="M0.5 9.5L7 5L10.5 10L4.5 15Z" fill="#eac282"/>
<path d="M6 4.8L9 2.8L12.8 8.2L10 10.3Z" fill="#6a6a6a"/><path d="M10.5 3.2L13.5 1L15.5 3.8L12.5 6Z" fill="#6a6a6a"/></svg>
<span class="t u" style="letter-spacing:-0.083px;left:69.8px;top:112px;">Format Painter</span>
<span class="t u" style="letter-spacing:-0.097px;left:47.0px;top:136px;color:#666;">Clipboard</span>
<svg style="left:148px;top:140px" width="8" height="8"><path d="M0.5 4.5V0.5H4.5" fill="none" stroke="#777"/><path d="M3 3L6 6" fill="none" stroke="#777" stroke-width="1.1"/><path d="M7.3 3.2V7.3H3.2Z" fill="#777"/></svg>
<div style="left:159px;top:63px;width:1px;height:84px;background:#dadada;"></div>
<div style="left:164px;top:70px;width:111px;height:23px;box-sizing:border-box;border:1px solid #c6c6c6;background:#fff;"></div>
<span class="t u" style="letter-spacing:-0.272px;left:167.5px;top:74px;">Times New Roma</span>
<svg style="left:264.5px;top:80.5px" width="6.5" height="4"><path d="M0 0H5.5L2.75 3Z" fill="#666"/></svg>
<div style="left:275px;top:70px;width:43px;height:23px;box-sizing:border-box;border:1px solid #c6c6c6;background:#fff;"></div>
<span class="t u" style="letter-spacing:-0.63px;left:278.1px;top:74px;">12</span>
<svg style="left:307.5px;top:80.5px" width="6.5" height="4"><path d="M0 0H5.5L2.75 3Z" fill="#666"/></svg>
<span class="t u" style="letter-spacing:1.828px;left:323.5px;top:74.5px;font-size:13px;">A</span>
<svg style="left:332px;top:73px" width="6" height="4"><path d="M0 3.5H5L2.5 0Z" fill="#3f7fc1"/></svg>
<span class="t u" style="letter-spacing:1.156px;left:346.5px;top:75px;font-size:11px;">A</span>
<svg style="left:354px;top:73.5px" width="6" height="4"><path d="M0 0H5L2.5 3.5Z" fill="#3f7fc1"/></svg>
<div style="left:164px;top:101px;width:22px;height:23px;background:#c6c6c6;"></div>
<span class="t u b" style="letter-spacing:-0.031px;left:169.6px;top:104px;font-size:12.5px;">B</span>
<span class="t si b" style="letter-spacing:1.938px;left:192.8px;top:104.5px;font-size:13px;color:#444;">I</span>
<span class="t u b" style="letter-spacing:0.628px;left:213.7px;top:104px;font-size:12px;">U</span>
<div style="left:214px;top:117px;width:9px;height:1px;background:#444;"></div>
<svg style="left:232.7px;top:111px" width="6.5" height="4"><path d="M0 0H5.5L2.75 3Z" fill="#666"/></svg>
<div style="left:246px;top:102px;width:1px;height:21px;background:#dadada;"></div>
<svg style="left:255px;top:105px" width="14" height="14"><rect x="0" y="0" width="1" height="1" fill="#6a6a6a"/><rect x="2" y="0" width="1" height="1" fill="#6a6a6a"/><rect x="4" y="0" width="1" height="1" fill="#6a6a6a"/><rect x="6" y="0" width="1" height="1" fill="#6a6a6a"/><rect x="8" y="0" width="1" height="1" fill="#6a6a6a"/><rect x="10" y="0" width="1" height="1" fill="#6a6a6a"/><rect x="12" y="0" width="1" height="1" fill="#6a6a6a"/><rect x="0" y="4" width="1" height="1" fill="#6a6a6a"/><rect x="2" y="4" width="1" height="1" fill="#6a6a6a"/><rect x="4" y="4" width="1" height="1" fill="#6a6a6a"/><rect x="6" y="4" width="1" height="1" fill="#6a6a6a"/><rect x="8" y="4" width="1" height="1" fill="#6a6a6a"/><rect x="10" y="4" width="1" height="1" fill="#6a6a6a"/><rect x="12" y="4" width="1" height="1" fill="#6a6a6a"/><rect x="0" y="8" width="1" height="1" fill="#6a6a6a"/><rect x="2" y="8" width="1" height="1" fill="#6a6a6a"/><rect x="4" y="8" width="1" height="1" fill="#6a6a6a"/><rect x="6" y="8" width="1" height="1" fill="#6a6a6a"/><rect x="8" y="8" width="1" height="1" fill="#6a6a6a"/><rect x="10" y="8" width="1" height="1" fill="#6a6a6a"/><rect x="12" y="8" width="1" height="1" fill="#6a6a6a"/><rect x="0" y="0" width="1" height="1" fill="#6a6a6a"/><rect x="0" y="2" width="1" height="1" fill="#6a6a6a"/><rect x="0" y="4" width="1" height="1" fill="#6a6a6a"/><rect x="0" y="6" width="1" height="1" fill="#6a6a6a"/><rect x="0" y="8" width="1" height="1" fill="#6a6a6a"/><rect x="0" y="10" width="1" height="1" fill="#6a6a6a"/><rect x="6" y="0" width="1" height="1" fill="#6a6a6a"/><rect x="6" y="2" width="1" height="1" fill="#6a6a6a"/><rect x="6" y="4" width="1" height="1" fill="#6a6a6a"/><rect x="6" y="6" width="1" height="1" fill="#6a6a6a"/><rect x="6" y="8" width="1" height="1" fill="#6a6a6a"/><rect x="6" y="10" width="1" height="1" fill="#6a6a6a"/><rect x="12" y="0" width="1" height="1" fill="#6a6a6a"/><rect x="12" y="2" width="1" height="1" fill="#6a6a6a"/><rect x="12" y="4" width="1" height="1" fill="#6a6a6a"/><rect x="12" y="6" width="1" height="1" fill="#6a6a6a"/><rect x="12" y="8" width="1" height="1" fill="#6a6a6a"/><rect x="12" y="10" width="1" height="1" fill="#6a6a6a"/><rect x="0" y="12" width="13" height="1.3" fill="#6a6a6a"/></svg>
<svg style="left:276px;top:111px" width="6.5" height="4"><path d="M0 0H5.5L2.75 3Z" fill="#666"/></svg>
<div style="left:289px;top:102px;width:1px;height:21px;background:#dadada;"></div>
<svg style="left:296px;top:103px" width="18" height="18"><path d="M7.5 3.5L13.5 9.5L8.5 13.5L3 8Z" fill="#fff" stroke="#6a6a6a" stroke-width="1"/>
<path d="M7.5 5V1.8A1.3 1.3 0 0 1 10 1.8V6" fill="none" stroke="#6a6a6a" stroke-width="1"/>
<path d="M12.5 7.5C14.5 8.5 15.5 10 15 12.5C13.8 11.5 13.3 10.5 13.2 9.3Z" fill="#3f7fc1"/>
<rect x="0.4" y="13" width="17" height="4" fill="#ffff00"/></svg>
<svg style="left:319px;top:111px" width="6.5" height="4"><path d="M0 0H5.5L2.75 3Z" fill="#666"/></svg>
<span class="t u b" style="letter-spacing:2.609px;left:333.0px;top:103px;font-size:13px;color:#555;">A</span>
<div style="left:331px;top:116px;width:16px;height:4px;background:#ff0000;"></div>
<svg style="left:352.6px;top:111px" width="6.5" height="4"><path d="M0 0H5.5L2.75 3Z" fill="#666"/></svg>
<span class="t u" style="letter-spacing:0.071px;left:242.9px;top:136px;color:#666;">Font</span>
<svg style="left:355px;top:140px" width="8" height="8"><path d="M0.5 4.5V0.5H4.5" fill="none" stroke="#777"/><path d="M3 3L6 6" fill="none" stroke="#777" stroke-width="1.1"/><path d="M7.3 3.2V7.3H3.2Z" fill="#777"/></svg>
<div style="left:366px;top:63px;width:1px;height:84px;background:#dadada;"></div>
<div style="left:393px;top:70px;width:22px;height:23px;background:#c6c6c6;"></div>
<svg style="left:375px;top:73px" width="20" height="20"><rect x="0" y="0" width="14" height="1" fill="#6a6a6a"/><rect x="0" y="3" width="14" height="1" fill="#6a6a6a"/><rect x="0" y="6" width="14" height="1" fill="#6a6a6a"/></svg>
<svg style="left:397px;top:77px" width="20" height="20"><rect x="0" y="0" width="14" height="1" fill="#6a6a6a"/><rect x="0" y="3" width="14" height="1" fill="#6a6a6a"/><rect x="0" y="6" width="14" height="1" fill="#6a6a6a"/></svg>
<svg style="left:419px;top:82px" width="20" height="20"><rect x="0" y="0" width="14" height="1" fill="#6a6a6a"/><rect x="0" y="3" width="14" height="1" fill="#6a6a6a"/><rect x="0" y="6" width="14" height="1" fill="#6a6a6a"/></svg>
<div style="left:441px;top:70px;width:1px;height:22px;background:#dadada;"></div>
<svg style="left:448px;top:72px" width="19" height="18"><text transform="translate(5.2 12.8) rotate(-45)" font-family="Liberation Sans" font-size="9.3" fill="#6a6a6a" stroke="#6a6a6a" stroke-width="0.35">ab</text>
<path d="M7.2 15.8L16.6 6.6M12.2 6.3H17V11.1" fill="none" stroke="#6a6a6a" stroke-width="1.2"/></svg>
<svg style="left:469px;top:80px" width="6" height="4"><path d="M0 0H5L2.5 3Z" fill="#666"/></svg>
<div style="left:494px;top:70px;width:1px;height:22px;background:#dadada;"></div>
<div style="left:499px;top:70px;width:81px;height:23px;background:#c6c6c6;"></div>
<svg style="left:502px;top:73px" width="17" height="16"><path d="M0.5 1.5H8.5V4.5H0.5Z" fill="#fff" stroke="#6a6a6a"/><path d="M9 3H15.5" stroke="#6a6a6a"/>
<path d="M0.5 7.5H8.5V14.5H0.5Z" fill="#fff" stroke="#6a6a6a"/><path d="M2 9.5H7M2 11.5H7" stroke="#3f7fc1"/>
<path d="M15.5 5.5V9.5H11M12.8 7.5L10.8 9.5L12.8 11.5" fill="none" stroke="#3f7fc1" stroke-width="1.1"/></svg>
<span class="t u" style="letter-spacing:-0.12px;left:520.7px;top:74px;">Wrap Text</span>
<div style="left:371px;top:101px;width:22px;height:23px;background:#c6c6c6;"></div>
<svg style="left:375px;top:107px" width="20" height="20"><rect x="0" y="0" width="14" height="1" fill="#6a6a6a"/><rect x="0" y="3" width="10" height="1" fill="#6a6a6a"/><rect x="0" y="6" width="14" height="1" fill="#6a6a6a"/><rect x="0" y="9" width="10" height="1" fill="#6a6a6a"/></svg>
<svg style="left:397px;top:107px" width="20" height="20"><rect x="0" y="0" width="14" height="1" fill="#6a6a6a"/><rect x="2" y="3" width="10" height="1" fill="#6a6a6a"/><rect x="0" y="6" width="14" height="1" fill="#6a6a6a"/><rect x="2" y="9" width="10" height="1" fill="#6a6a6a"/></svg>
<svg style="left:419px;top:107px" width="20" height="20"><rect x="0" y="0" width="14" height="1" fill="#6a6a6a"/><rect x="4" y="3" width="10" height="1" fill="#6a6a6a"/><rect x="0" y="6" width="14" height="1" fill="#6a6a6a"/><rect x="4" y="9" width="10" height="1" fill="#6a6a6a"/></svg>
<div style="left:441px;top:101px;width:1px;height:22px;background:#dadada;"></div>
<svg style="left:449px;top:105px" width="17" height="14"><path d="M0 0.5H16M7 3.5H16M7 6.5H16M7 9.5H16M0 12.5H16" stroke="#6a6a6a"/><path d="M6 5H1.2M3.5 2.5L1 5L3.5 7.5" fill="none" stroke="#3f7fc1" stroke-width="1.4"/></svg>
<svg style="left:471px;top:105px" width="17" height="14"><path d="M0 0.5H16M7 3.5H16M7 6.5H16M7 9.5H16M0 12.5H16" stroke="#6a6a6a"/><path d="M0 5H5M2.7 2.5L5.2 5L2.7 7.5" fill="none" stroke="#3f7fc1" stroke-width="1.4"/></svg>
<div style="left:494px;top:101px;width:1px;height:22px;background:#dadada;"></div>
<div style="left:499px;top:101px;width:127px;height:23px;background:#c6c6c6;"></div>
<svg style="left:502px;top:104px" width="16" height="15"><rect x="0.5" y="0.5" width="14" height="14" fill="#fff" stroke="#6a6a6a"/><path d="M0.5 4.5H14.5M0.5 10.5H14.5M7.5 0.5V4.5M7.5 10.5V14.5" stroke="#6a6a6a"/>
<path d="M2.5 7.5H12.5M4 6L2.5 7.5L4 9M11 6L12.5 7.5L11 9" fill="none" stroke="#3f7fc1"/></svg>
<span class="t u" style="letter-spacing:0.043px;left:520.7px;top:105px;">Merge &amp; Center</span>
<svg style="left:615.8px;top:111.5px" width="6.5" height="4"><path d="M0 0H5.5L2.75 3Z" fill="#555"/></svg>
<span class="t u" style="letter-spacing:0.047px;left:463.5px;top:136px;color:#666;">Alignment</span>
<svg style="left:619px;top:140px" width="8" height="8"><path d="M0.5 4.5V0.5H4.5" fill="none" stroke="#777"/><path d="M3 3L6 6" fill="none" stroke="#777" stroke-width="1.1"/><path d="M7.3 3.2V7.3H3.2Z" fill="#777"/></svg>
<div style="left:630px;top:63px;width:1px;height:84px;background:#dadada;"></div>
<div style="left:635px;top:70px;width:131px;height:23px;box-sizing:border-box;border:1px solid #c6c6c6;background:#fff;"></div>
<span class="t u" style="letter-spacing:-0.472px;left:638.3px;top:74px;">General</span>
<svg style="left:755.5px;top:80.5px" width="6.5" height="4"><path d="M0 0H5.5L2.75 3Z" fill="#666"/></svg>
<svg style="left:637px;top:103px" width="19" height="18"><rect x="1" y="1" width="16" height="8.5" fill="#3f7fc1"/><rect x="2.6" y="2.6" width="12.8" height="5.3" fill="#fff"/>
<circle cx="8.7" cy="5.2" r="2.2" fill="#3f7fc1"/>
<ellipse cx="13.2" cy="8.4" rx="3.6" ry="1.5" fill="#eac282" stroke="#f1f1f1" stroke-width="0.7"/><ellipse cx="13.2" cy="10.8" rx="3.6" ry="1.5" fill="#eac282" stroke="#f1f1f1" stroke-width="0.7"/><ellipse cx="13.2" cy="13.2" rx="3.6" ry="1.5" fill="#eac282" stroke="#f1f1f1" stroke-width="0.7"/><ellipse cx="8.2" cy="13.6" rx="3.6" ry="1.5" fill="#eac282" stroke="#f1f1f1" stroke-width="0.7"/><ellipse cx="8.2" cy="16" rx="3.6" ry="1.5" fill="#eac282" stroke="#f1f1f1" stroke-width="0.7"/></svg>
<svg style="left:660px;top:111px" width="6" height="4"><path d="M0 0H5L2.5 3Z" fill="#666"/></svg>
<span class="t u" style="letter-spacing:0.056px;left:673.7px;top:104px;font-size:15px;">%</span>
<span class="t u b" style="letter-spacing:1.438px;left:697.3px;top:97px;font-size:20px;">,</span>
<div style="left:717px;top:101px;width:1px;height:22px;background:#dadada;"></div>
<svg style="left:725px;top:105px" width="16" height="16"><text x="6.5" y="6" font-family="Liberation Sans" font-size="8.5" fill="#444">.0</text><text x="2.5" y="13.5" font-family="Liberation Sans" font-size="8.5" fill="#444">.00</text><path d="M6 3.5H1.2M3 1.5L1 3.5L3 5.5" fill="none" stroke="#3f7fc1" stroke-width="1.2"/></svg>
<svg style="left:747px;top:105px" width="16" height="16"><text x="2.5" y="6" font-family="Liberation Sans" font-size="8.5" fill="#444">.00</text><text x="7.5" y="13.5" font-family="Liberation Sans" font-size="8.5" fill="#444">.0</text><path d="M0.5 11H5.5M3.7 9L5.7 11L3.7 13" fill="none" stroke="#3f7fc1" stroke-width="1.2"/></svg>
<span class="t u" style="letter-spacing:-0.265px;left:672.1px;top:136px;color:#666;">Number</span>
<svg style="left:759px;top:140px" width="8" height="8"><path d="M0.5 4.5V0.5H4.5" fill="none" stroke="#777"/><path d="M3 3L6 6" fill="none" stroke="#777" stroke-width="1.1"/><path d="M7.3 3.2V7.3H3.2Z" fill="#777"/></svg>
<div style="left:770px;top:63px;width:1px;height:84px;background:#dadada;"></div>
<svg style="left:797px;top:67px" width="31" height="32"><rect x="0.5" y="0.5" width="27" height="24" fill="#fff" stroke="#8a8a8a"/>
<path d="M0.5 6.5H27.5M0.5 12.5H27.5M0.5 18.5H27.5M7.5 0.5V24.5M14.5 0.5V24.5M21.5 0.5V24.5" stroke="#b0b0b0"/>
<rect x="8" y="1" width="6" height="5.5" fill="#d9583a"/><rect x="8" y="7" width="11" height="5.5" fill="#3f7fc1"/>
<rect x="8" y="13" width="9" height="5.5" fill="#d9583a"/><rect x="8" y="19" width="4" height="5.5" fill="#3f7fc1"/>
<rect x="15.5" y="17.5" width="14" height="12" fill="#fff" stroke="#6a6a6a"/>
<path d="M19 21.5H26M19 25H26M24.5 19.5L20.5 27.5" stroke="#333" stroke-width="1.1"/></svg>
<span class="t u" style="letter-spacing:0.178px;left:780.0px;top:100px;">Conditional</span>
<span class="t u" style="letter-spacing:0.194px;left:776.9px;top:116px;">Formatting</span>
<svg style="left:839px;top:123px" width="6" height="4"><path d="M0 0H5L2.5 3Z" fill="#666"/></svg>
<svg style="left:862px;top:67px" width="31" height="32"><rect x="0.5" y="2.5" width="24" height="19" fill="#fff" stroke="#8a8a8a"/>
<rect x="6.5" y="7.5" width="18" height="14" fill="#c3d4e8"/>
<path d="M0.5 7.5H24.5M0.5 12.5H24.5M0.5 17.5H24.5M6.5 2.5V21.5M12.5 2.5V21.5M18.5 2.5V21.5" stroke="#a6a6a6"/>
<rect x="0.5" y="2.5" width="24" height="19" fill="none" stroke="#8a8a8a"/><path d="M29.2 8.2L26.6 5.8L18.3 16.6L21.6 19.4Z" fill="#7a7a7a"/><path d="M18 17L21.3 19.8" stroke="#f1f1f1" stroke-width="0.9"/>
<path d="M20.3 20C17 18.6 13.5 20.5 12 23C10.5 25.6 9 27.6 6.6 29.4C11 30.1 16.8 29.6 19.8 26.6C21.8 24.6 22 21.8 20.3 20Z" fill="#3f7fc1"/>
<path d="M13.2 25.6C14 24 15.6 22.8 17.2 22.6" fill="none" stroke="#fff" stroke-width="1.4" stroke-linecap="round"/></svg>
<span class="t u" style="letter-spacing:-0.191px;left:848.7px;top:100px;">Format as</span>
<span class="t u" style="letter-spacing:-0.177px;left:858.0px;top:116px;">Table</span>
<svg style="left:888.3px;top:123px" width="6" height="4"><path d="M0 0H5L2.5 3Z" fill="#666"/></svg>
<svg style="left:912px;top:67px" width="31" height="32"><rect x="0.5" y="0.5" width="25" height="21" fill="#fff" stroke="#8a8a8a"/>
<path d="M0.5 5.5H25.5M0.5 15.5H25.5M5.5 0.5V21.5M19.5 0.5V21.5" stroke="#a6a6a6"/>
<rect x="6" y="6" width="13" height="9" fill="#c3d4e8"/>
<rect x="0.5" y="0.5" width="25" height="21" fill="none" stroke="#8a8a8a"/><path d="M29.2 8.2L26.6 5.8L18.3 16.6L21.6 19.4Z" fill="#7a7a7a"/><path d="M18 17L21.3 19.8" stroke="#f1f1f1" stroke-width="0.9"/>
<path d="M20.3 20C17 18.6 13.5 20.5 12 23C10.5 25.6 9 27.6 6.6 29.4C11 30.1 16.8 29.6 19.8 26.6C21.8 24.6 22 21.8 20.3 20Z" fill="#3f7fc1"/>
<path d="M13.2 25.6C14 24 15.6 22.8 17.2 22.6" fill="none" stroke="#fff" stroke-width="1.4" stroke-linecap="round"/></svg>
<span class="t u" style="letter-spacing:-0.043px;left:914.3px;top:100px;">Cell</span>
<span class="t u" style="letter-spacing:-0.365px;left:905.8px;top:116px;">Styles</span>
<svg style="left:939px;top:123px" width="6" height="4"><path d="M0 0H5L2.5 3Z" fill="#666"/></svg>
<span class="t u" style="letter-spacing:-0.615px;left:845.7px;top:136px;color:#666;">Styles</span>
<div style="left:951px;top:63px;width:1px;height:84px;background:#dadada;"></div>
<svg style="left:963px;top:67px" width="29" height="29"><path d="M1.5 0.5H15.5V5.5H1.5ZM8.5 0.5V5.5" fill="#fff" stroke="#8a8a8a"/>
<path d="M1.5 16.5H15.5V26.5H1.5ZM1.5 21.5H15.5M8.5 16.5V26.5" fill="#fff" stroke="#8a8a8a"/>
<rect x="12.5" y="8.5" width="14" height="5" fill="#bdd0e6" stroke="#8a8a8a"/><path d="M19.5 8.5V13.5" stroke="#8a8a8a"/>
<path d="M9.5 11H2.5M5.5 8L2.5 11L5.5 14" fill="none" stroke="#3f7fc1" stroke-width="1.6"/></svg>
<span class="t u" style="letter-spacing:-0.119px;left:961.6px;top:100px;">Insert</span>
<svg style="left:973.8px;top:122px" width="6" height="4"><path d="M0 0H5L2.5 3Z" fill="#666"/></svg>
<svg style="left:1005px;top:67px" width="31" height="29"><path d="M0.5 0.5H14.5V5.5H0.5ZM7.5 0.5V5.5" fill="#fff" stroke="#8a8a8a"/>
<path d="M0.5 17.5H14.5V27.5H0.5ZM0.5 22.5H14.5M7.5 17.5V27.5" fill="#fff" stroke="#8a8a8a"/>
<rect x="6.5" y="8.5" width="9" height="5" fill="#bdd0e6" stroke="#8a8a8a"/>
<path d="M15.5 5.5L29 17.5M29 6.5L15.5 18" stroke="#d9583a" stroke-width="2"/></svg>
<span class="t u" style="letter-spacing:-0.215px;left:1001.9px;top:100px;">Delete</span>
<svg style="left:1015.8px;top:122px" width="6" height="4"><path d="M0 0H5L2.5 3Z" fill="#666"/></svg>
<svg style="left:1046px;top:64px" width="30" height="34"><path d="M1 4.5H23M1 1.5V7.5M23 1.5V7.5M4 2.5L1.5 4.5L4 6.5M20 2.5L22.5 4.5L20 6.5" fill="none" stroke="#3f7fc1"/>
<path d="M1.5 8.5H28.5V29H20.5L18.5 32.5H11L9.5 30.5L8 32.5H1.5Z" fill="#fff" stroke="#8a8a8a"/>
<path d="M1.5 13.5H28.5M1.5 23.5H28.5M8.5 8.5V29M16.5 8.5V29M23.5 8.5V29M1.5 29H28.5" stroke="#b0b0b0"/>
<rect x="9" y="14" width="7" height="9" fill="#3f7fc1"/></svg>
<span class="t u" style="letter-spacing:0.047px;left:1041.5px;top:100px;">Format</span>
<svg style="left:1059px;top:122px" width="6" height="4"><path d="M0 0H5L2.5 3Z" fill="#666"/></svg>
<span class="t u" style="letter-spacing:-0.674px;left:1007.2px;top:136px;color:#666;">Cells</span>
<div style="left:1087px;top:63px;width:1px;height:84px;background:#dadada;"></div>
<svg style="left:1095px;top:65px" width="16" height="16"><path d="M14.5 3.8V1.2H1.5L8.2 7.8L1.5 14H14.5V11.4" fill="none" stroke="#444" stroke-width="2"/></svg>
<span class="t u" style="letter-spacing:0.12px;left:1113.6px;top:66.3px;">AutoSum</span>
<svg style="left:1173.6px;top:72.5px" width="6" height="4"><path d="M0 0H5L2.5 3Z" fill="#666"/></svg>
<svg style="left:1095px;top:88px" width="16" height="16"><rect x="1.5" y="0.5" width="13" height="14" fill="#fff" stroke="#8a8a8a"/><rect x="1" y="0" width="14" height="3" fill="#6a6a6a"/>
<path d="M8 5V12.5M4.8 9.2L8 12.5L11.2 9.2" fill="none" stroke="#3f7fc1" stroke-width="2"/></svg>
<span class="t u" style="letter-spacing:0.018px;left:1113.6px;top:89.3px;">Fill</span>
<svg style="left:1131.8px;top:96px" width="6" height="4"><path d="M0 0H5L2.5 3Z" fill="#666"/></svg>
<svg style="left:1095px;top:111px" width="17" height="15"><path d="M2 9L9.5 1.5L14.5 6L7.5 13H4.5Z" fill="#ec7f9b"/><path d="M2 9L5 6L10 10.5L7.5 13H4.5Z" fill="#f8d3dc"/><path d="M4 14.5H15" stroke="#888"/></svg>
<span class="t u" style="letter-spacing:-0.158px;left:1113.6px;top:112.3px;">Clear</span>
<svg style="left:1143.8px;top:119px" width="6" height="4"><path d="M0 0H5L2.5 3Z" fill="#666"/></svg>
<svg style="left:1189px;top:67px" width="31" height="28"><text x="1" y="12.1" font-family="Liberation Sans" font-size="15" fill="#3f7fc1" stroke="#3f7fc1" stroke-width="0.5">A</text>
<text x="1.8" y="26.6" font-family="Liberation Sans" font-size="15" fill="#9b4fb5" stroke="#9b4fb5" stroke-width="0.5">Z</text>
<path d="M13.5 8H29.5L23.2 14.5V22.5L20 20.5V14.5Z" fill="#8a8a8a" stroke="#6a6a6a" stroke-width="0.8"/></svg>
<span class="t u" style="letter-spacing:0.207px;left:1187.3px;top:100px;">Sort &amp;</span>
<span class="t u" style="letter-spacing:0.355px;left:1187.3px;top:116px;">Filter</span>
<svg style="left:1217.5px;top:123px" width="6" height="4"><path d="M0 0H5L2.5 3Z" fill="#666"/></svg>
<svg style="left:1233px;top:67px" width="30" height="30"><circle cx="18.5" cy="10.5" r="8.3" fill="#fff" stroke="#3f7fc1" stroke-width="2.2"/><path d="M12.5 17L2.5 27" stroke="#3f7fc1" stroke-width="3.4" stroke-linecap="round"/></svg>
<span class="t u" style="letter-spacing:0.185px;left:1230.0px;top:100px;">Find &amp;</span>
<span class="t u" style="letter-spacing:-0.277px;left:1227.6px;top:116px;">Select</span>
<svg style="left:1262px;top:123px" width="6" height="4"><path d="M0 0H5L2.5 3Z" fill="#666"/></svg>
<span class="t u" style="letter-spacing:0.042px;left:1161.6px;top:136px;color:#666;">Editing</span>
<div style="left:1274px;top:63px;width:1px;height:84px;background:#dadada;"></div>
<svg style="left:1395px;top:139.5px" width="10" height="8"><path d="M1.2 5.4L4.6 2L8 5.4" fill="none" stroke="#666" stroke-width="1.9"/></svg>
<div style="left:7px;top:162px;width:102px;height:25.5px;box-sizing:border-box;border:1px solid #c6c6c6;background:#fff;"></div>
<span class="t u" style="letter-spacing:0.692px;left:13.7px;top:167.8px;">D11</span>
<svg style="left:95px;top:172.5px" width="8" height="5"><path d="M0 0H7L3.5 4Z" fill="#666"/></svg>
<div style="left:123px;top:171px;width:2px;height:2px;background:#b0b0b0;"></div>
<div style="left:123px;top:175px;width:2px;height:2px;background:#b0b0b0;"></div>
<div style="left:123px;top:179px;width:2px;height:2px;background:#b0b0b0;"></div>
<div style="left:139px;top:162px;width:110px;height:25.5px;box-sizing:border-box;border:1px solid #c6c6c6;background:#fff;"></div>
<svg style="left:152px;top:170px" width="12" height="11"><path d="M1 0.5L11 10.5M11 0.5L1 10.5" stroke="#b9b9b9" stroke-width="1.9"/></svg>
<svg style="left:188px;top:170px" width="14" height="11"><path d="M1 6L4.5 9.5L12.5 0.8" fill="none" stroke="#b9b9b9" stroke-width="2.3"/></svg>
<span class="t si" style="left:224.5px;top:166px;font-size:15px;color:#555;">f</span>
<span class="t si b" style="left:230px;top:171px;font-size:9px;color:#555;">x</span>
<div style="left:252px;top:162px;width:1157px;height:25.5px;box-sizing:border-box;border:1px solid #c6c6c6;background:#fff;"></div>
<span class="t u" style="letter-spacing:-0.233px;left:264.0px;top:167.3px;font-size:14px;">Nếu nhập: Chương trình lấy mã đã nhập.</span>
<svg style="left:1396px;top:171px" width="10" height="7"><path d="M1.2 1.2L4.6 4.6L8 1.2" fill="none" stroke="#666" stroke-width="1.9"/></svg>
</body></html>
